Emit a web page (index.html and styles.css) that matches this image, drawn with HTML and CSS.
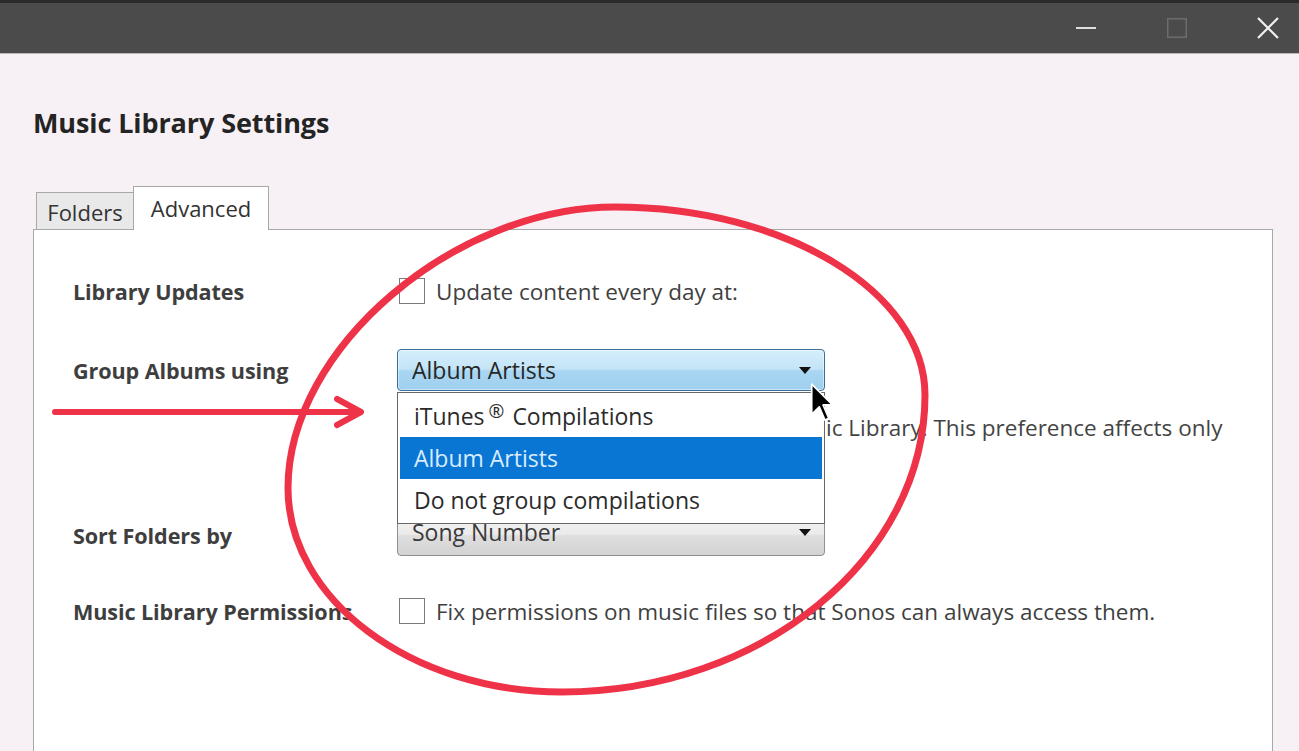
FILE: index.html
```html
<!DOCTYPE html>
<html lang="en">
<head>
<meta charset="utf-8">
<title>Music Library Settings</title>
<link rel="stylesheet" href="styles.css">
</head>
<body>
<div class="window">
  <header class="titlebar">
    <div class="tb-btns">
      <span class="tb-btn"><svg width="20" height="20" viewBox="0 0 20 20"><rect x="0" y="9" width="20" height="2" fill="#dedede"/></svg></span>
      <span class="tb-btn"><svg width="20" height="20" viewBox="0 0 20 20"><rect x="0.75" y="0.75" width="18.5" height="18.5" fill="none" stroke="#6c6c6c" stroke-width="1.5"/></svg></span>
      <span class="tb-btn"><svg width="22" height="22" viewBox="0 0 22 22"><path d="M1 1 L21 21 M21 1 L1 21" stroke="#f2f2f2" stroke-width="2.2" fill="none"/></svg></span>
    </div>
  </header>

  <main class="dialog">
    <h1 class="dialog-title">Music Library Settings</h1>

    <div class="tabs">
      <div class="tab tab-folders">Folders</div>
      <div class="tab tab-active">Advanced</div>
    </div>

    <section class="panel">
      <div class="row row-updates">
        <div class="label">Library Updates</div>
        <div class="control">
          <label class="check"><span class="box"></span><span>Update content every day at:</span></label>
        </div>
      </div>

      <div class="row row-group">
        <div class="label">Group Albums using</div>
        <div class="control">
          <div class="combo combo-open">
            <span>Album Artists</span>
            <span class="caret"></span>
          </div>
          <ul class="listbox">
            <li class="opt">iTunes<span class="reg">®</span>Compilations</li>
            <li class="opt opt-selected">Album Artists</li>
            <li class="opt">Do not group compilations</li>
          </ul>
          <p class="desc"><span class="desc-lead">Choose how albums are grouped in your Mus</span>ic Library. This preference affects only</p>
        </div>
      </div>

      <div class="row row-sort">
        <div class="label">Sort Folders by</div>
        <div class="control">
          <div class="combo combo-gray">
            <span>Song Number</span>
            <span class="caret"></span>
          </div>
        </div>
      </div>

      <div class="row row-perm">
        <div class="label">Music Library Permissions</div>
        <div class="control">
          <label class="check"><span class="box"></span><span>Fix permissions on music files so that Sonos can always access them.</span></label>
        </div>
      </div>
    </section>
  </main>

  <svg class="annot" width="1299" height="751" viewBox="0 0 1299 751">
    <path d="M615 207 C785 207 925 292 925 395 C925 558 762 692 562 692 C412 692 288 600 288 488 C288 348 455 207 615 207 Z" fill="none" stroke="#ee3348" stroke-width="7"/>
    <path d="M55 412 H358 M337 399 L361 412 L337 425" fill="none" stroke="#ee3348" stroke-width="6" stroke-linecap="round" stroke-linejoin="round"/>
  </svg>

  <svg class="cursor" width="25" height="39" viewBox="-0.6 -0.6 12.6 20.6">
    <path d="M0 0 L0 16 L4 12 L7 19 L9 18 L6 11 L11 11 Z" fill="#000" stroke="#fff" stroke-width="0.9" stroke-linejoin="round"/>
  </svg>
</div>
</body>
</html>
```

FILE: styles.css
```css
* { box-sizing: border-box; }

html, body {
  margin: 0;
  padding: 0;
}

body {
  width: 1299px;
  height: 751px;
  overflow: hidden;
  background: #f7f1f5;
  font-family: "Open Sans", "Noto Sans", sans-serif;
  color: #3a3a3a;
}

.window {
  position: relative;
  width: 1299px;
  height: 751px;
  overflow: hidden;
}

/* ---------- title bar ---------- */
.titlebar {
  height: 54px;
  background: #4b4b4b;
  border-top: 3px solid #2a2a2a;
  border-bottom: 1px solid #b9b9b9;
  display: flex;
  justify-content: flex-end;
  align-items: center;
  padding-right: 8px;
}

.tb-btns {
  display: flex;
  gap: 45px;
  align-items: center;
}

.tb-btn {
  width: 46px;
  height: 40px;
  display: flex;
  align-items: center;
  justify-content: center;
}

/* ---------- dialog ---------- */
.dialog {
  padding-left: 33px;
}

.dialog-title {
  margin: 50px 0 0 0;
  font-size: 27px;
  line-height: 38px;
  font-weight: 700;
  color: #242424;
  letter-spacing: -0.1px;
}

.tabs {
  display: flex;
  align-items: flex-end;
  margin-top: 44px;
  margin-left: 3px;
  height: 43px;
  position: relative;
  z-index: 2;
}

.tab {
  font-size: 22px;
  color: #333;
  border: 1px solid #a8a8a8;
  border-bottom: none;
  display: flex;
  align-items: center;
  justify-content: center;
}

.tab-folders {
  width: 97px;
  height: 37px;
  background: #e9e9e9;
  border-right: none;
  padding-top: 1px;
}

.tab-active {
  width: 136px;
  height: 44px;
  background: #fff;
  margin-bottom: -1px;
  padding-bottom: 2px;
}

.panel {
  position: relative;
  width: 1240px;
  height: 560px;
  background: #fff;
  border: 1px solid #a8a8a8;
  padding: 40px 0 0 39px;
}

/* ---------- rows ---------- */
.row {
  display: grid;
  grid-template-columns: 324px 428px;
  align-items: start;
}

.label {
  height: 42px;
  display: flex;
  align-items: center;
  font-size: 21.6px;
  font-weight: 700;
  color: #3e3e3e;
  letter-spacing: -0.1px;
  white-space: nowrap;
}

.control {
  position: relative;
}

.row-group { margin-top: 37px; }
.row-sort { margin-top: 71px; }
.row-perm { margin-top: 34px; }

.check {
  height: 42px;
  display: flex;
  align-items: center;
  gap: 11px;
  font-size: 22.5px;
  color: #3f3f3f;
  white-space: nowrap;
  padding-left: 2px;
}

.box {
  width: 26px;
  height: 26px;
  border: 1.5px solid #7b7b7b;
  background: #fff;
  flex: none;
}

/* ---------- combo boxes ---------- */
.combo {
  height: 42px;
  border-radius: 4px;
  display: flex;
  align-items: center;
  justify-content: space-between;
  padding: 0 13px 0 14px;
  font-size: 23px;
  color: #262626;
}

.combo-open {
  border: 1.5px solid #3a6f9c;
  background: linear-gradient(#d6eefb 0%, #c3e4f7 48%, #a9d6f2 52%, #9fd0ef 100%);
  box-shadow: inset 0 0 0 1px rgba(255,255,255,0.45);
}

.combo-gray {
  border: 1.5px solid #8f8f8f;
  background: linear-gradient(#f4f4f4 0%, #ebebeb 48%, #dedede 52%, #d3d3d3 100%);
  color: #3a3a3a;
  padding-bottom: 6px;
}

.caret {
  width: 0;
  height: 0;
  border-left: 6px solid transparent;
  border-right: 6px solid transparent;
  border-top: 7px solid #111;
}

.listbox {
  position: absolute;
  top: 43px;
  left: 0;
  width: 428px;
  margin: 0;
  padding: 2px;
  list-style: none;
  background: #fff;
  border: 1.5px solid #676767;
  z-index: 5;
}

.opt {
  height: 42px;
  display: flex;
  align-items: center;
  padding-left: 14px;
  font-size: 23px;
  color: #2b2b2b;
  white-space: nowrap;
}

.opt-selected {
  background: #0a76d4;
  color: #d9ecff;
}

.reg {
  font-size: 19px;
  position: relative;
  top: -5px;
  margin: 0 8px 0 4px;
}

.desc {
  margin: 22px 0 0 0;
  height: 30px;
  line-height: 30px;
  font-size: 22.5px;
  color: #444;
  white-space: nowrap;
  padding-left: 2px;
}

.desc-lead {
  display: inline-block;
  width: 427px;
  text-align: right;
  overflow: hidden;
  vertical-align: top;
}

/* ---------- overlays ---------- */
.annot {
  position: absolute;
  left: 0;
  top: 0;
  pointer-events: none;
  z-index: 10;
}

.cursor {
  position: absolute;
  left: 810px;
  top: 383px;
  z-index: 11;
}
```
